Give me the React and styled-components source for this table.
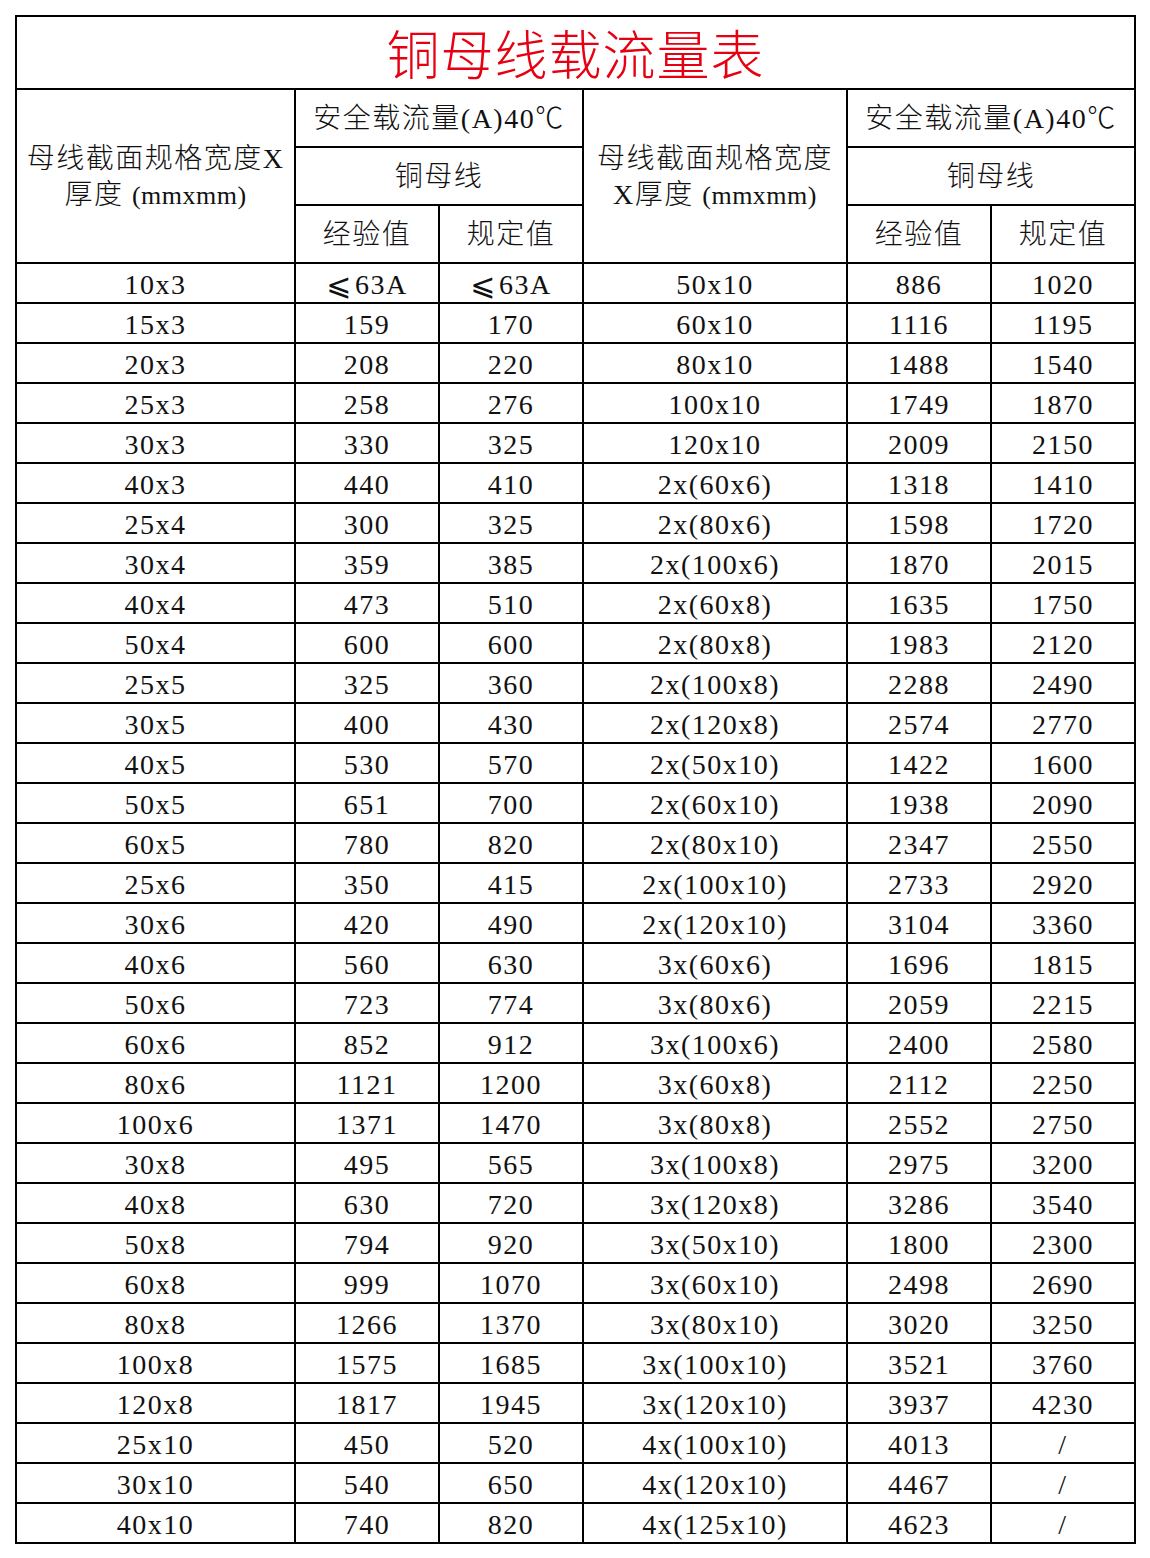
import React from 'react';
import styled, { createGlobalStyle } from 'styled-components';

const GlobalStyle = createGlobalStyle`
  html, body {
    margin: 0;
    padding: 0;
    background: #fff;
  }
  body {
    font-family: "Liberation Serif", "Noto Sans CJK SC", serif;
    color: #111;
  }
`;

const Page = styled.div`
  padding: 15px;
  width: 1150px;
  box-sizing: border-box;
`;

const Sheet = styled.div`
  display: grid;
  width: 1121px;
  grid-template-columns: 277px 142px 142px 262px 142px 142px;
  grid-template-rows: 71px 56px 56px 56px;
  grid-auto-rows: 38px;
  gap: 2px;
  padding: 2px;
  background: #000;
  box-sizing: border-box;
`;

const Cell = styled.div`
  background: #fff;
  display: flex;
  align-items: center;
  justify-content: center;
  text-align: center;
  font-size: 28px;
  letter-spacing: 1.5px;
  line-height: 1;
  white-space: nowrap;
  grid-column: ${p => p.$col || 'auto'};
  grid-row: ${p => p.$row || 'auto'};
`;

const Title = styled(Cell)`
  grid-column: 1 / -1;
  color: #e60012;
  font-size: 53px;
  letter-spacing: 1px;
  font-weight: 300;
  padding-top: 9px;
`;

const HeadCell = styled(Cell)`
  font-weight: 300;
  letter-spacing: 1.5px;
  padding-top: 2px;
`;

const SpecHead = styled(HeadCell)`
  flex-direction: column;
  gap: 6px;
  line-height: 30px;
  padding-top: 2px;
`;

const Unit = styled.span`
  font-size: 26px;
  letter-spacing: 0.5px;
`;

const DataCell = styled(Cell)`
  padding-top: 3px;
`;

// slanted less-or-equal, drawn wide as in the sheet
const Sym = styled.span`
  font-family: "DejaVu Sans", "Noto Sans CJK SC", sans-serif;
  font-size: 30px;
  margin-right: 2px;
`;

const fmt = v =>
  v.startsWith('≤') ? (
    <>
      <Sym>⩽</Sym>
      {v.slice(1)}
    </>
  ) : (
    v
  );

const left = [
  ['10x3', '≤63A', '≤63A'],
  ['15x3', '159', '170'],
  ['20x3', '208', '220'],
  ['25x3', '258', '276'],
  ['30x3', '330', '325'],
  ['40x3', '440', '410'],
  ['25x4', '300', '325'],
  ['30x4', '359', '385'],
  ['40x4', '473', '510'],
  ['50x4', '600', '600'],
  ['25x5', '325', '360'],
  ['30x5', '400', '430'],
  ['40x5', '530', '570'],
  ['50x5', '651', '700'],
  ['60x5', '780', '820'],
  ['25x6', '350', '415'],
  ['30x6', '420', '490'],
  ['40x6', '560', '630'],
  ['50x6', '723', '774'],
  ['60x6', '852', '912'],
  ['80x6', '1121', '1200'],
  ['100x6', '1371', '1470'],
  ['30x8', '495', '565'],
  ['40x8', '630', '720'],
  ['50x8', '794', '920'],
  ['60x8', '999', '1070'],
  ['80x8', '1266', '1370'],
  ['100x8', '1575', '1685'],
  ['120x8', '1817', '1945'],
  ['25x10', '450', '520'],
  ['30x10', '540', '650'],
  ['40x10', '740', '820'],
];

const right = [
  ['50x10', '886', '1020'],
  ['60x10', '1116', '1195'],
  ['80x10', '1488', '1540'],
  ['100x10', '1749', '1870'],
  ['120x10', '2009', '2150'],
  ['2x(60x6)', '1318', '1410'],
  ['2x(80x6)', '1598', '1720'],
  ['2x(100x6)', '1870', '2015'],
  ['2x(60x8)', '1635', '1750'],
  ['2x(80x8)', '1983', '2120'],
  ['2x(100x8)', '2288', '2490'],
  ['2x(120x8)', '2574', '2770'],
  ['2x(50x10)', '1422', '1600'],
  ['2x(60x10)', '1938', '2090'],
  ['2x(80x10)', '2347', '2550'],
  ['2x(100x10)', '2733', '2920'],
  ['2x(120x10)', '3104', '3360'],
  ['3x(60x6)', '1696', '1815'],
  ['3x(80x6)', '2059', '2215'],
  ['3x(100x6)', '2400', '2580'],
  ['3x(60x8)', '2112', '2250'],
  ['3x(80x8)', '2552', '2750'],
  ['3x(100x8)', '2975', '3200'],
  ['3x(120x8)', '3286', '3540'],
  ['3x(50x10)', '1800', '2300'],
  ['3x(60x10)', '2498', '2690'],
  ['3x(80x10)', '3020', '3250'],
  ['3x(100x10)', '3521', '3760'],
  ['3x(120x10)', '3937', '4230'],
  ['4x(100x10)', '4013', '/'],
  ['4x(120x10)', '4467', '/'],
  ['4x(125x10)', '4623', '/'],
];

const App = () => (
  <Page>
    <GlobalStyle />
    <Sheet>
      <Title>铜母线载流量表</Title>

      <SpecHead $col="1" $row="2 / 5">
        <span>母线截面规格宽度X</span>
        <span>厚度 <Unit>(mmxmm)</Unit></span>
      </SpecHead>
      <HeadCell $col="2 / 4" $row="2">安全载流量(A)40℃</HeadCell>
      <SpecHead $col="4" $row="2 / 5">
        <span>母线截面规格宽度</span>
        <span>X厚度 <Unit>(mmxmm)</Unit></span>
      </SpecHead>
      <HeadCell $col="5 / 7" $row="2">安全载流量(A)40℃</HeadCell>

      <HeadCell $col="2 / 4" $row="3">铜母线</HeadCell>
      <HeadCell $col="5 / 7" $row="3">铜母线</HeadCell>

      <HeadCell $col="2" $row="4">经验值</HeadCell>
      <HeadCell $col="3" $row="4">规定值</HeadCell>
      <HeadCell $col="5" $row="4">经验值</HeadCell>
      <HeadCell $col="6" $row="4">规定值</HeadCell>

      {left.map((row, i) => (
        <React.Fragment key={i}>
          {row.concat(right[i]).map((v, j) => (
            <DataCell key={j}>{fmt(v)}</DataCell>
          ))}
        </React.Fragment>
      ))}
    </Sheet>
  </Page>
);

export default App;
